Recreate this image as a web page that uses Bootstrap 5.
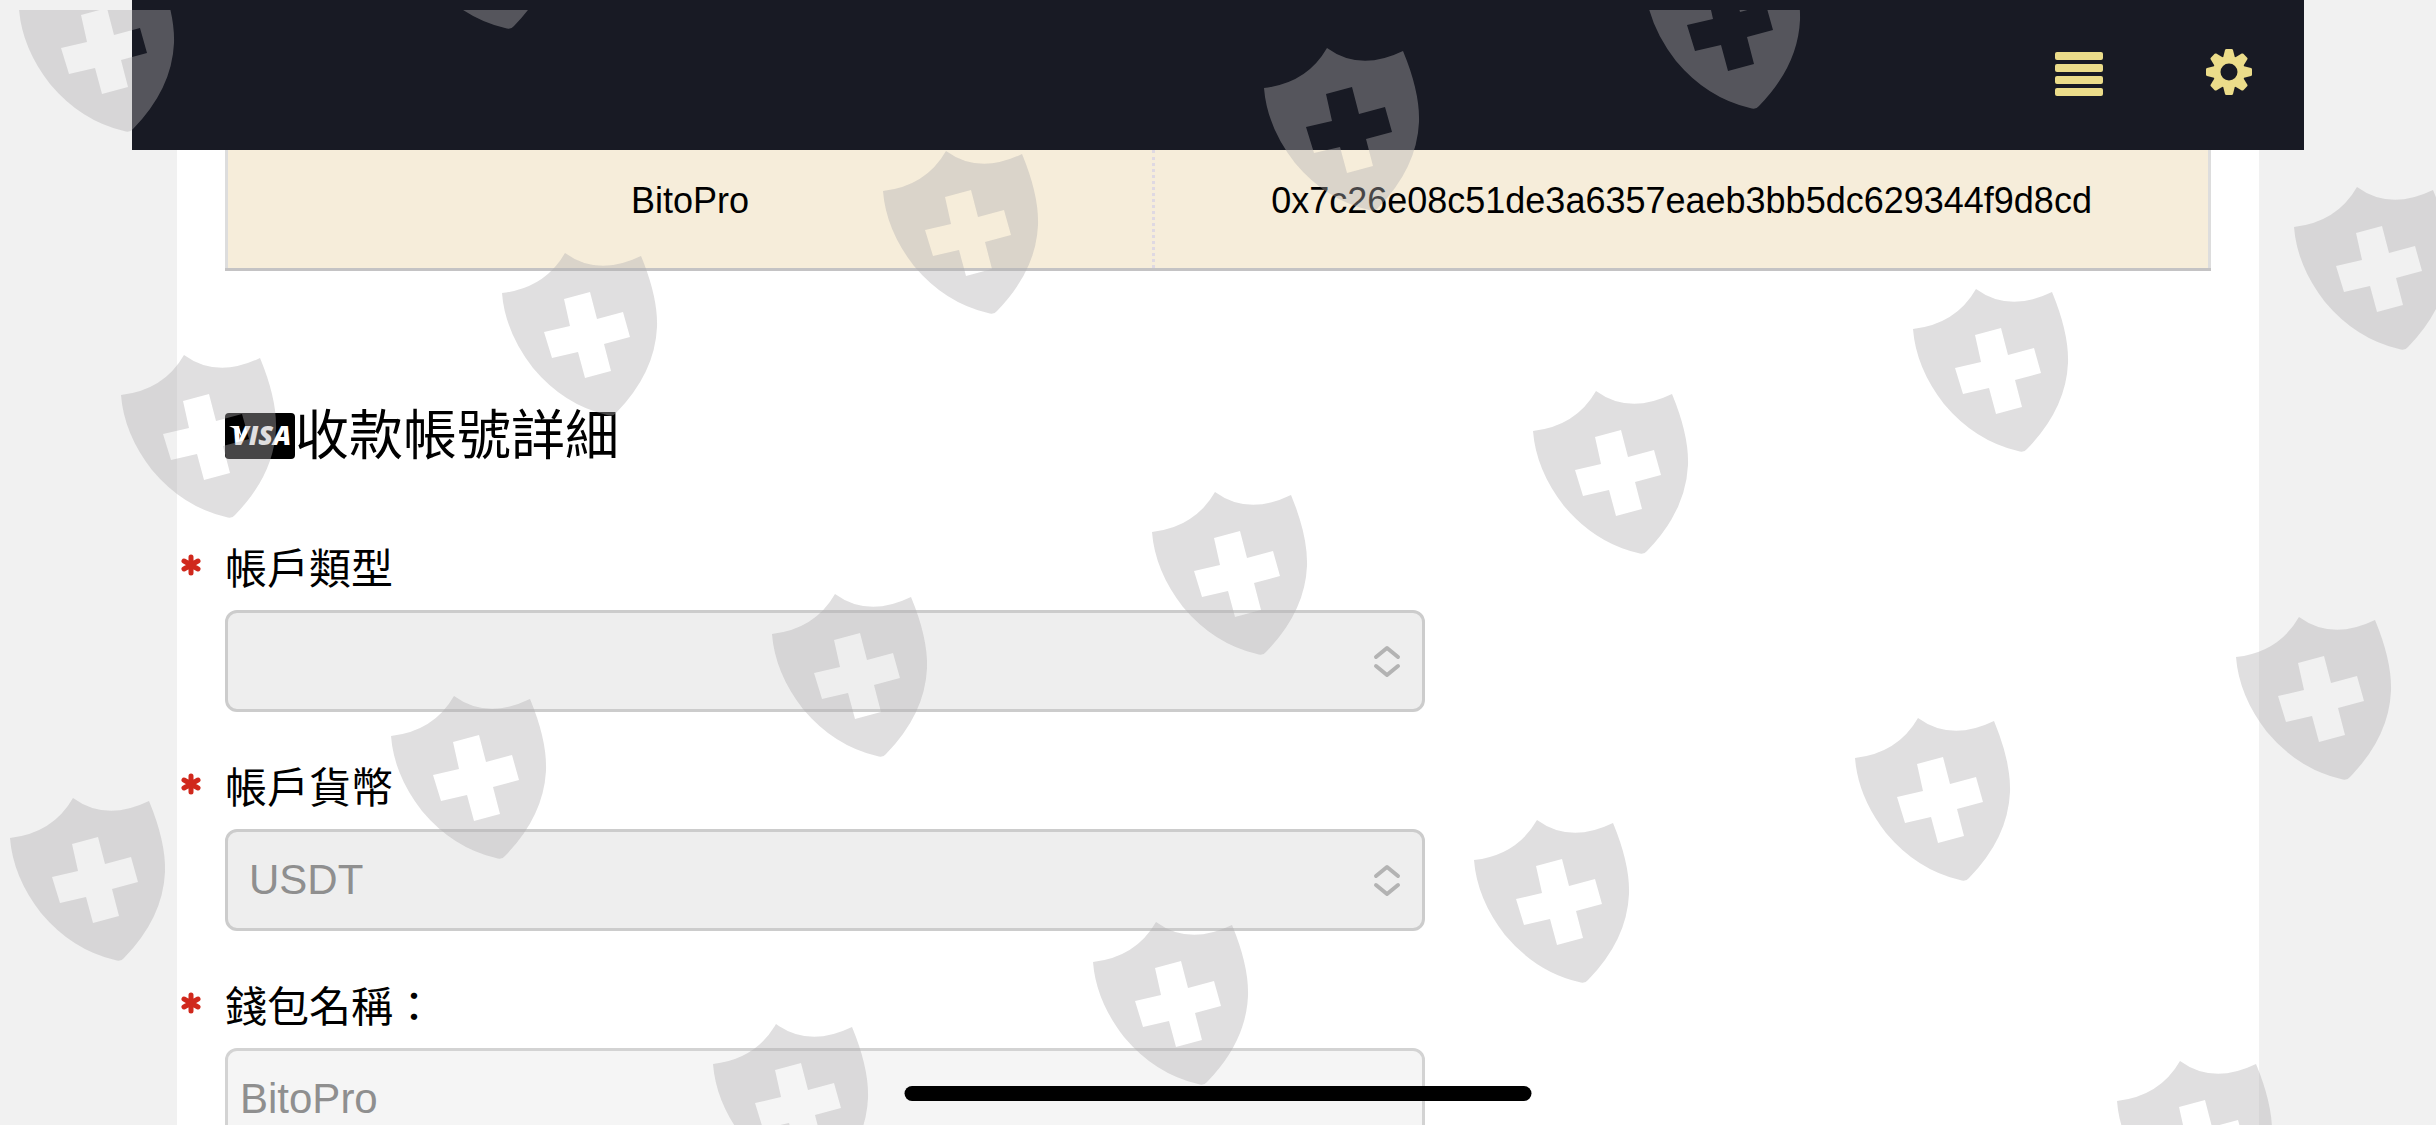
<!DOCTYPE html>
<html lang="zh-Hant">
<head>
<meta charset="utf-8">
<meta name="viewport" content="width=device-width, initial-scale=1">
<title>收款帳號詳細</title>
<link href="https://cdn.jsdelivr.net/npm/bootstrap@5.3.0/dist/css/bootstrap.min.css" rel="stylesheet">
<style>
  body { background: #f1f1f1; color: #000; font-family: "Liberation Sans", "Noto Sans CJK TC", sans-serif; font-size: 36px; line-height: 54px; }
  .app-shell { height: 100vh; padding: 0 132px; }
  .top-bar { height: 150px; padding: 0 45px; background: #181a24; gap: 90px; }
  .icon-btn { color: #ebdc8a; line-height: 0; }
  .icon-btn svg { width: 60px; height: 60px; }
  .sheet { margin: 0 45px; padding: 0 48px; background: #fff; min-height: 100vh; }
  .wallet-table { border: 3px solid #ddd; border-top: 0; border-bottom-color: #c4c3c4; margin-bottom: 125px; }
  .wallet-table td { background: #f6edda; color: #000; padding: 24px 16px 40px; border: 0; text-align: center; }
  .wallet-table td:first-child { width: 46.75%; border-right: 3px dotted #dfd9e2; }
  .section-title { font-size: 54px; line-height: 80px; font-weight: 400; margin-bottom: 64px; }
  .section-title svg { width: 70px; height: 46px; }
  .field { max-width: 1200px; margin-bottom: 47px; }
  .field-label { position: relative; font-size: 42px; line-height: 60px; margin-bottom: 10px; }
  .req { position: absolute; left: -45px; top: 14px; width: 22px; height: 22px; }
  .field .form-select, .field .form-control { height: 102px; border: 3px solid #ccc; border-radius: 12px; font-size: 42px; line-height: 60px; color: #8f8f8f; opacity: 1; }
  .field .form-select { padding: 0 80px 0 21px; background-color: #eee; background-position: right 18px center; background-size: 34px 40px;
    background-image: url("data:image/svg+xml,%3Csvg xmlns='http://www.w3.org/2000/svg' viewBox='0 0 34 40'%3E%3Cpath d='M6 16 17 7 28 16M6 25 17 34 28 25' fill='none' stroke='%23b3b3b3' stroke-width='4' stroke-linecap='round' stroke-linejoin='round'/%3E%3C/svg%3E"); }
  .field .form-control { padding: 0 12px; background-color: #f5f5f5; border-color: #d3d3d3; }
  .shields { top: 10px; left: 0; width: 100%; height: 100%; pointer-events: none; z-index: 10; color: #b1afb1; opacity: .4; }
  .home-bar { width: 627px; height: 15px; bottom: 24px; left: 50%; transform: translateX(-50%); z-index: 20; }
</style>
</head>
<body>
<div class="app-shell overflow-hidden">
  <header class="top-bar d-flex align-items-center justify-content-end">
    <button type="button" class="icon-btn btn p-0 border-0" aria-label="選單">
      <svg viewBox="0 0 60 60" fill="currentColor"><rect x="6" y="7" width="48" height="8" rx="2"/><rect x="6" y="19" width="48" height="8" rx="2"/><rect x="6" y="31" width="48" height="8" rx="2"/><rect x="6" y="43" width="48" height="8" rx="2"/></svg>
    </button>
    <button type="button" class="icon-btn btn p-0 border-0" aria-label="設定">
      <svg viewBox="-30 -27 60 60" fill="currentColor">
        <defs><path id="tooth" d="M-6-14 -4-22Q-3.700-23-2.700-23H2.700Q3.700-23 4-22L6-14Z"/></defs>
        <path fill-rule="evenodd" d="M0-16A16 16 0 1 1 0 16A16 16 0 1 1 0-16ZM0-8.500A8.500 8.500 0 1 0 0 8.500A8.500 8.500 0 1 0 0-8.500Z"/>
        <use href="#tooth"/><use href="#tooth" transform="rotate(45)"/><use href="#tooth" transform="rotate(90)"/><use href="#tooth" transform="rotate(135)"/><use href="#tooth" transform="rotate(180)"/><use href="#tooth" transform="rotate(225)"/><use href="#tooth" transform="rotate(270)"/><use href="#tooth" transform="rotate(315)"/>
      </svg>
    </button>
  </header>

  <main class="sheet">
    <table class="wallet-table table">
      <tbody><tr><td>BitoPro</td><td>0x7c26e08c51de3a6357eaeb3bb5dc629344f9d8cd</td></tr></tbody>
    </table>

    <h2 class="section-title d-flex align-items-center">
      <svg viewBox="0 0 70 46" role="img" aria-label="VISA"><rect width="70" height="46" rx="4"/><path d="M4 13H10Q14 13 15 17L17 25Q13 16 4 13Z" fill="#fff"/><text x="7" y="32" font-family="Open Sans, sans-serif" font-size="27" font-weight="800" font-style="italic" fill="#fff">VISA</text></svg>
      <span>收款帳號詳細</span>
    </h2>

    <form>
      <div class="field">
        <label class="field-label d-block" for="accType"><svg class="req" viewBox="-11 -11 22 22"><path d="M0-8V8M-7-4 7 4M-7 4 7-4" stroke="#d0281c" stroke-width="5" stroke-linecap="round"/></svg>帳戶類型</label>
        <select class="form-select" id="accType" disabled><option></option></select>
      </div>
      <div class="field">
        <label class="field-label d-block" for="accCur"><svg class="req" viewBox="-11 -11 22 22"><path d="M0-8V8M-7-4 7 4M-7 4 7-4" stroke="#d0281c" stroke-width="5" stroke-linecap="round"/></svg>帳戶貨幣</label>
        <select class="form-select" id="accCur" disabled><option>USDT</option></select>
      </div>
      <div class="field">
        <label class="field-label d-block" for="walletName"><svg class="req" viewBox="-11 -11 22 22"><path d="M0-8V8M-7-4 7 4M-7 4 7-4" stroke="#d0281c" stroke-width="5" stroke-linecap="round"/></svg>錢包名稱：</label>
        <input class="form-control" id="walletName" type="text" value="BitoPro" disabled>
      </div>
    </form>
  </main>
</div>

<!-- Watermark layer: one shield, repeated on a slanted grid -->
<svg class="shields position-fixed" fill="currentColor" aria-hidden="true">
  <defs>
    <path id="shield" fill-rule="evenodd" d="M0 0Q43-5 63-40Q96-16 139-37Q156 4 155 34Q153 80 114 120Q111 124 105 122Q62 112 31 75Q3 39 0 0ZM62 6 88-1 95 26 121 19 128 44 102 51 109 78 83 85 76 59 50 65 42 39 68 33Z"/>
  </defs>
  <g transform="translate(0 -9)">
    <use href="#shield" x="19" y="8"/><use href="#shield" x="400" y="-95"/>
    <use href="#shield" x="121" y="394"/><use href="#shield" x="502" y="292"/><use href="#shield" x="883" y="190"/><use href="#shield" x="1264" y="87"/><use href="#shield" x="1645" y="-15"/>
    <use href="#shield" x="10" y="837"/><use href="#shield" x="391" y="735"/><use href="#shield" x="772" y="633"/><use href="#shield" x="1152" y="531"/><use href="#shield" x="1533" y="430"/><use href="#shield" x="1913" y="328"/><use href="#shield" x="2294" y="226"/>
    <use href="#shield" x="713" y="1063"/><use href="#shield" x="1093" y="961"/><use href="#shield" x="1474" y="859"/><use href="#shield" x="1855" y="757"/><use href="#shield" x="2236" y="656"/>
    <use href="#shield" x="2117" y="1100"/>
  </g>
</svg>
<div class="home-bar position-fixed bg-black rounded-pill"></div>
<script src="https://cdn.jsdelivr.net/npm/bootstrap@5.3.0/dist/js/bootstrap.bundle.min.js"></script>
</body>
</html>
